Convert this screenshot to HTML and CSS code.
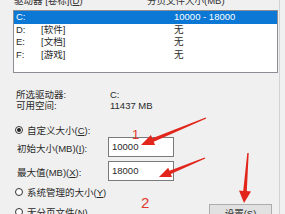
FILE: index.html
```html
<!DOCTYPE html>
<html lang="zh">
<head>
<meta charset="utf-8">
<link rel="stylesheet" href="styles.css">
</head>
<body>
<div class="page">
  <div class="main">
    <div class="hdr"><span class="h1">驱动器 [卷标](<u>D</u>)</span><span class="h2">分页文件大小(MB)</span></div>
    <div class="list">
      <div class="row sel"><span class="c1">C:</span><span class="c2"></span><span class="c3">10000 - 18000</span></div>
      <div class="row"><span class="c1">D:</span><span class="c2">[软件]</span><span class="c3">无</span></div>
      <div class="row"><span class="c1">E:</span><span class="c2">[文档]</span><span class="c3">无</span></div>
      <div class="row"><span class="c1">F:</span><span class="c2">[游戏]</span><span class="c3">无</span></div>
    </div>
    <div class="info">
      <div class="irow"><span class="lbl">所选驱动器:</span><span>C:</span></div>
      <div class="irow"><span class="lbl">可用空间:</span><span>11437 MB</span></div>
    </div>
    <div class="radio-row r1"><span class="radio on"></span><span>自定义大小(<u>C</u>):</span></div>
    <div class="field f1"><span class="flbl">初始大小(MB)(<u>I</u>):</span><div class="input">10000</div></div>
    <div class="field f2"><span class="flbl">最大值(MB)(<u>X</u>):</span><div class="input">18000</div></div>
    <div class="radio-row r2"><span class="radio"></span><span>系统管理的大小(<u>Y</u>)</span></div>
    <div class="bottom">
      <div class="radio-row"><span class="radio"></span><span>无分页文件(<u>N</u>)</span></div>
      <div class="btn">设置(<u>S</u>)</div>
    </div>
  </div>
  <svg class="marks" width="285" height="214" viewBox="0 0 285 214">
    <polygon points="205.7,117.4 152.3,138.3 150.9,134.9 141,145 155.1,145.1 153.7,141.7 206.3,118.6"/>
    <polygon points="204.7,157.4 169.5,170.8 168.2,167.8 159,177 172,177 170.8,174 205.3,158.6"/>
    <polygon points="247.3,152.9 243.2,190.9 239,190.5 244,203 251,191.5 246.8,191.1 248.7,153.1"/>
  </svg>
  <span class="num n1">1</span>
  <span class="num n2">2</span>
</div>
</body>
</html>
```
FILE: styles.css
```css
html, body {
  margin: 0;
  padding: 0;
}
body {
  background: #f0f0f0;
  font-family: "Liberation Sans", "Noto Sans CJK SC", sans-serif;
  font-size: 9.5px;
  color: #2a2a2a;
}
.page {
  position: relative;
  width: 285px;
  height: 214px;
  overflow: hidden;
}
.main {
  width: 279px;
  height: 214px;
  border-right: 1px solid #d2d2d2;
  display: flex;
  flex-direction: column;
}
.hdr {
  display: flex;
  height: 18px;
  line-height: 18px;
  margin-top: -8px;
  padding-left: 14px;
  color: #333;
}
.h1 { width: 133px; }
.list {
  margin-left: 13px;
  width: 265px;
  height: 63px;
  box-sizing: border-box;
  border: 1px solid #8a8d93;
  background: #fff;
  flex: none;
}
.row {
  display: flex;
  height: 12.6px;
  line-height: 12.6px;
}
.row.sel {
  background: #0a78d4;
  color: #fff;
}
.c1 { width: 27px; padding-left: 2px; box-sizing: border-box; }
.c2 { width: 133px; }
.c3 { flex: 1; }
.info {
  margin-top: 17px;
  padding-left: 16px;
}
.irow {
  display: flex;
  height: 10.5px;
  line-height: 10.5px;
}
.lbl { width: 94px; }
.radio-row {
  display: flex;
  align-items: center;
  gap: 4px;
  height: 12px;
  padding-left: 15px;
}
.radio {
  width: 8px;
  height: 8px;
  border: 1px solid #333;
  border-radius: 50%;
  background: #fff;
  box-sizing: border-box;
  display: flex;
  align-items: center;
  justify-content: center;
}
.radio.on::after {
  content: "";
  width: 4px;
  height: 4px;
  border-radius: 50%;
  background: #222;
}
.r1 { margin-top: 13px; }
.field {
  display: flex;
  align-items: center;
  padding-left: 17px;
}
.flbl { width: 91px; padding-top: 2px; }
.input {
  width: 66px;
  height: 20px;
  box-sizing: border-box;
  border: 1px solid #7a7a7a;
  background: #fff;
  padding: 3px 0 0 3px;
  line-height: 12px;
}
.f1 { margin-top: 1px; }
.f2 { margin-top: 4px; }
.r2 { margin-top: 5px; }
.bottom {
  display: flex;
  align-items: flex-start;
  margin-top: 8px;
}
.btn {
  margin-left: auto;
  margin-right: 7px;
  margin-top: -2px;
  width: 63px;
  height: 22px;
  box-sizing: border-box;
  border: 1px solid #adadad;
  background: #e1e1e1;
  text-align: center;
  line-height: 18px;
}
.marks {
  position: absolute;
  left: 0;
  top: 0;
  fill: #e2261c;
}
.num {
  position: absolute;
  color: #e0392e;
  font-family: "Liberation Sans", sans-serif;
  line-height: 1;
}
.n1 { left: 132px; top: 128px; font-size: 13px; }
.n2 { left: 141px; top: 195px; font-size: 15px; }
```
